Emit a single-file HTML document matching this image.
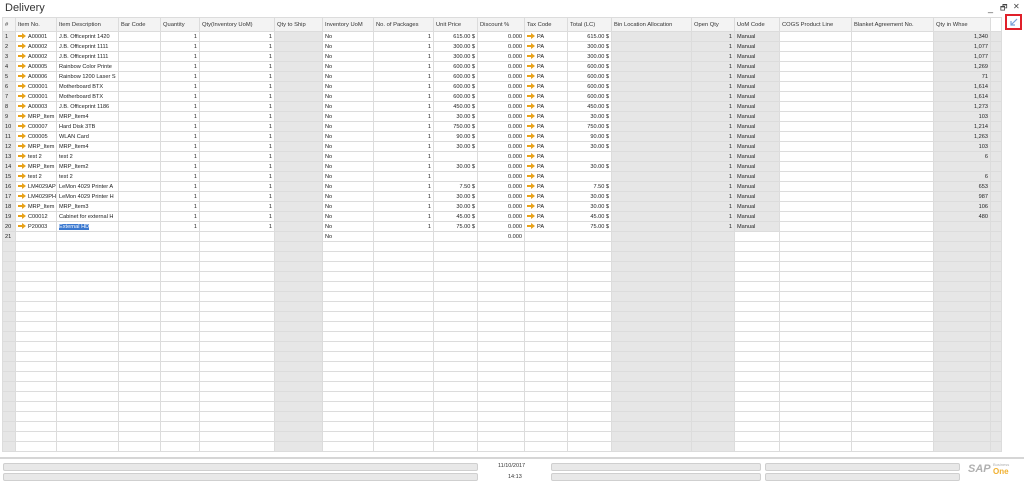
<!DOCTYPE html>
<html><head><meta charset="utf-8"><style>
*{margin:0;padding:0;box-sizing:border-box}
body{width:1024px;height:483px;background:#fff;font-family:"Liberation Sans",sans-serif;position:relative;overflow:hidden;color:#222}
.title{position:absolute;left:5px;top:2px;font-size:11px;color:#333}
.wc{position:absolute;top:2px;font-size:9px;color:#444}
#g{position:absolute;left:2px;top:17px;width:999px;border-collapse:collapse;table-layout:fixed;font-size:5.6px;background:#fff}
#g td{height:10px;border:1px solid #dcdcdc;padding:0 2px;white-space:nowrap;overflow:hidden;line-height:8px}
#g tr.h td{height:14px;background:#f3f3f3;font-size:5.8px;color:#333}
.r{text-align:right}
.gr{background:#e6e6e6}
td.n{background:#e6e6e6}
.ar{display:inline-block;position:relative;width:8px;height:5px;margin-right:2px;vertical-align:-1px}
.ar:before{content:"";position:absolute;left:0;top:1.5px;width:4px;height:2px;background:#e8a21a}
.ar:after{content:"";position:absolute;left:4px;top:-0.5px;border-left:4px solid #e8a21a;border-top:3px solid transparent;border-bottom:3px solid transparent}
.sel{background:#3a78d0;color:#fff}
.sep{position:absolute;left:0;top:457px;width:1024px;height:2px;background:#d6d6d6}
.bx{position:absolute;height:8px;background:#e8e8e8;border:1px solid #cfcfcf;border-radius:2px}
.ft{position:absolute;font-size:5.5px;color:#333}
</style></head><body>
<div class="title">Delivery</div>
<div class="wc" style="left:988px;top:3px">_</div>
<div class="wc" style="left:1000px;font-size:8px">&#x1F5D7;</div>
<div class="wc" style="left:1013px;font-size:8px">&#x2715;</div>
<table id="g">
<colgroup><col style="width:13px"><col style="width:41px"><col style="width:62px"><col style="width:42px"><col style="width:39px"><col style="width:75px"><col style="width:48px"><col style="width:51px"><col style="width:60px"><col style="width:44px"><col style="width:47px"><col style="width:43px"><col style="width:44px"><col style="width:80px"><col style="width:43px"><col style="width:45px"><col style="width:72px"><col style="width:82px"><col style="width:57px"><col style="width:11px"></colgroup>
<tr class="h"><td>#</td><td>Item No.</td><td>Item Description</td><td>Bar Code</td><td>Quantity</td><td>Qty(Inventory UoM)</td><td>Qty to Ship</td><td>Inventory UoM</td><td>No. of Packages</td><td>Unit Price</td><td>Discount %</td><td>Tax Code</td><td>Total (LC)</td><td>Bin Location Allocation</td><td>Open Qty</td><td>UoM Code</td><td>COGS Product Line</td><td>Blanket Agreement No.</td><td>Qty in Whse</td><td style="background:#fff"></td></tr>
<tr><td class="n">1</td><td><i class="ar"></i>A00001</td><td>J.B. Officeprint 1420</td><td></td><td class="r">1</td><td class="r">1</td><td class="gr"></td><td>No</td><td class="r">1</td><td class="r">615.00 $</td><td class="r">0.000</td><td><i class="ar"></i>PA</td><td class="r">615.00 $</td><td class="gr"></td><td class="gr r">1</td><td class="gr">Manual</td><td></td><td></td><td class="gr r">1,340</td><td class="gr"></td></tr>
<tr><td class="n">2</td><td><i class="ar"></i>A00002</td><td>J.B. Officeprint 1111</td><td></td><td class="r">1</td><td class="r">1</td><td class="gr"></td><td>No</td><td class="r">1</td><td class="r">300.00 $</td><td class="r">0.000</td><td><i class="ar"></i>PA</td><td class="r">300.00 $</td><td class="gr"></td><td class="gr r">1</td><td class="gr">Manual</td><td></td><td></td><td class="gr r">1,077</td><td class="gr"></td></tr>
<tr><td class="n">3</td><td><i class="ar"></i>A00002</td><td>J.B. Officeprint 1111</td><td></td><td class="r">1</td><td class="r">1</td><td class="gr"></td><td>No</td><td class="r">1</td><td class="r">300.00 $</td><td class="r">0.000</td><td><i class="ar"></i>PA</td><td class="r">300.00 $</td><td class="gr"></td><td class="gr r">1</td><td class="gr">Manual</td><td></td><td></td><td class="gr r">1,077</td><td class="gr"></td></tr>
<tr><td class="n">4</td><td><i class="ar"></i>A00005</td><td>Rainbow Color Printe</td><td></td><td class="r">1</td><td class="r">1</td><td class="gr"></td><td>No</td><td class="r">1</td><td class="r">600.00 $</td><td class="r">0.000</td><td><i class="ar"></i>PA</td><td class="r">600.00 $</td><td class="gr"></td><td class="gr r">1</td><td class="gr">Manual</td><td></td><td></td><td class="gr r">1,269</td><td class="gr"></td></tr>
<tr><td class="n">5</td><td><i class="ar"></i>A00006</td><td>Rainbow 1200 Laser S</td><td></td><td class="r">1</td><td class="r">1</td><td class="gr"></td><td>No</td><td class="r">1</td><td class="r">600.00 $</td><td class="r">0.000</td><td><i class="ar"></i>PA</td><td class="r">600.00 $</td><td class="gr"></td><td class="gr r">1</td><td class="gr">Manual</td><td></td><td></td><td class="gr r">71</td><td class="gr"></td></tr>
<tr><td class="n">6</td><td><i class="ar"></i>C00001</td><td>Motherboard BTX</td><td></td><td class="r">1</td><td class="r">1</td><td class="gr"></td><td>No</td><td class="r">1</td><td class="r">600.00 $</td><td class="r">0.000</td><td><i class="ar"></i>PA</td><td class="r">600.00 $</td><td class="gr"></td><td class="gr r">1</td><td class="gr">Manual</td><td></td><td></td><td class="gr r">1,614</td><td class="gr"></td></tr>
<tr><td class="n">7</td><td><i class="ar"></i>C00001</td><td>Motherboard BTX</td><td></td><td class="r">1</td><td class="r">1</td><td class="gr"></td><td>No</td><td class="r">1</td><td class="r">600.00 $</td><td class="r">0.000</td><td><i class="ar"></i>PA</td><td class="r">600.00 $</td><td class="gr"></td><td class="gr r">1</td><td class="gr">Manual</td><td></td><td></td><td class="gr r">1,614</td><td class="gr"></td></tr>
<tr><td class="n">8</td><td><i class="ar"></i>A00003</td><td>J.B. Officeprint 1186</td><td></td><td class="r">1</td><td class="r">1</td><td class="gr"></td><td>No</td><td class="r">1</td><td class="r">450.00 $</td><td class="r">0.000</td><td><i class="ar"></i>PA</td><td class="r">450.00 $</td><td class="gr"></td><td class="gr r">1</td><td class="gr">Manual</td><td></td><td></td><td class="gr r">1,273</td><td class="gr"></td></tr>
<tr><td class="n">9</td><td><i class="ar"></i>MRP_Item</td><td>MRP_Item4</td><td></td><td class="r">1</td><td class="r">1</td><td class="gr"></td><td>No</td><td class="r">1</td><td class="r">30.00 $</td><td class="r">0.000</td><td><i class="ar"></i>PA</td><td class="r">30.00 $</td><td class="gr"></td><td class="gr r">1</td><td class="gr">Manual</td><td></td><td></td><td class="gr r">103</td><td class="gr"></td></tr>
<tr><td class="n">10</td><td><i class="ar"></i>C00007</td><td>Hard Disk 3TB</td><td></td><td class="r">1</td><td class="r">1</td><td class="gr"></td><td>No</td><td class="r">1</td><td class="r">750.00 $</td><td class="r">0.000</td><td><i class="ar"></i>PA</td><td class="r">750.00 $</td><td class="gr"></td><td class="gr r">1</td><td class="gr">Manual</td><td></td><td></td><td class="gr r">1,214</td><td class="gr"></td></tr>
<tr><td class="n">11</td><td><i class="ar"></i>C00005</td><td>WLAN Card</td><td></td><td class="r">1</td><td class="r">1</td><td class="gr"></td><td>No</td><td class="r">1</td><td class="r">90.00 $</td><td class="r">0.000</td><td><i class="ar"></i>PA</td><td class="r">90.00 $</td><td class="gr"></td><td class="gr r">1</td><td class="gr">Manual</td><td></td><td></td><td class="gr r">1,263</td><td class="gr"></td></tr>
<tr><td class="n">12</td><td><i class="ar"></i>MRP_Item</td><td>MRP_Item4</td><td></td><td class="r">1</td><td class="r">1</td><td class="gr"></td><td>No</td><td class="r">1</td><td class="r">30.00 $</td><td class="r">0.000</td><td><i class="ar"></i>PA</td><td class="r">30.00 $</td><td class="gr"></td><td class="gr r">1</td><td class="gr">Manual</td><td></td><td></td><td class="gr r">103</td><td class="gr"></td></tr>
<tr><td class="n">13</td><td><i class="ar"></i>test 2</td><td>test 2</td><td></td><td class="r">1</td><td class="r">1</td><td class="gr"></td><td>No</td><td class="r">1</td><td class="r"></td><td class="r">0.000</td><td><i class="ar"></i>PA</td><td class="r"></td><td class="gr"></td><td class="gr r">1</td><td class="gr">Manual</td><td></td><td></td><td class="gr r">6</td><td class="gr"></td></tr>
<tr><td class="n">14</td><td><i class="ar"></i>MRP_Item</td><td>MRP_Item2</td><td></td><td class="r">1</td><td class="r">1</td><td class="gr"></td><td>No</td><td class="r">1</td><td class="r">30.00 $</td><td class="r">0.000</td><td><i class="ar"></i>PA</td><td class="r">30.00 $</td><td class="gr"></td><td class="gr r">1</td><td class="gr">Manual</td><td></td><td></td><td class="gr r"></td><td class="gr"></td></tr>
<tr><td class="n">15</td><td><i class="ar"></i>test 2</td><td>test 2</td><td></td><td class="r">1</td><td class="r">1</td><td class="gr"></td><td>No</td><td class="r">1</td><td class="r"></td><td class="r">0.000</td><td><i class="ar"></i>PA</td><td class="r"></td><td class="gr"></td><td class="gr r">1</td><td class="gr">Manual</td><td></td><td></td><td class="gr r">6</td><td class="gr"></td></tr>
<tr><td class="n">16</td><td><i class="ar"></i>LM4029AP</td><td>LeMon 4029 Printer A</td><td></td><td class="r">1</td><td class="r">1</td><td class="gr"></td><td>No</td><td class="r">1</td><td class="r">7.50 $</td><td class="r">0.000</td><td><i class="ar"></i>PA</td><td class="r">7.50 $</td><td class="gr"></td><td class="gr r">1</td><td class="gr">Manual</td><td></td><td></td><td class="gr r">653</td><td class="gr"></td></tr>
<tr><td class="n">17</td><td><i class="ar"></i>LM4029PH</td><td>LeMon 4029 Printer H</td><td></td><td class="r">1</td><td class="r">1</td><td class="gr"></td><td>No</td><td class="r">1</td><td class="r">30.00 $</td><td class="r">0.000</td><td><i class="ar"></i>PA</td><td class="r">30.00 $</td><td class="gr"></td><td class="gr r">1</td><td class="gr">Manual</td><td></td><td></td><td class="gr r">987</td><td class="gr"></td></tr>
<tr><td class="n">18</td><td><i class="ar"></i>MRP_Item</td><td>MRP_Item3</td><td></td><td class="r">1</td><td class="r">1</td><td class="gr"></td><td>No</td><td class="r">1</td><td class="r">30.00 $</td><td class="r">0.000</td><td><i class="ar"></i>PA</td><td class="r">30.00 $</td><td class="gr"></td><td class="gr r">1</td><td class="gr">Manual</td><td></td><td></td><td class="gr r">106</td><td class="gr"></td></tr>
<tr><td class="n">19</td><td><i class="ar"></i>C00012</td><td>Cabinet for external H</td><td></td><td class="r">1</td><td class="r">1</td><td class="gr"></td><td>No</td><td class="r">1</td><td class="r">45.00 $</td><td class="r">0.000</td><td><i class="ar"></i>PA</td><td class="r">45.00 $</td><td class="gr"></td><td class="gr r">1</td><td class="gr">Manual</td><td></td><td></td><td class="gr r">480</td><td class="gr"></td></tr>
<tr><td class="n">20</td><td><i class="ar"></i>P20003</td><td><span class="sel">External HD</span></td><td></td><td class="r">1</td><td class="r">1</td><td class="gr"></td><td>No</td><td class="r">1</td><td class="r">75.00 $</td><td class="r">0.000</td><td><i class="ar"></i>PA</td><td class="r">75.00 $</td><td class="gr"></td><td class="gr r">1</td><td class="gr">Manual</td><td></td><td></td><td class="gr r"></td><td class="gr"></td></tr>
<tr><td class="n">21</td><td></td><td></td><td></td><td></td><td></td><td class="gr"></td><td>No</td><td></td><td></td><td class="r">0.000</td><td></td><td></td><td class="gr"></td><td class="gr"></td><td></td><td></td><td></td><td class="gr"></td><td class="gr"></td></tr>
<tr><td class="n"></td><td></td><td></td><td></td><td></td><td></td><td class="gr"></td><td></td><td></td><td></td><td></td><td></td><td></td><td class="gr"></td><td class="gr"></td><td></td><td></td><td></td><td class="gr"></td><td class="gr"></td></tr>
<tr><td class="n"></td><td></td><td></td><td></td><td></td><td></td><td class="gr"></td><td></td><td></td><td></td><td></td><td></td><td></td><td class="gr"></td><td class="gr"></td><td></td><td></td><td></td><td class="gr"></td><td class="gr"></td></tr>
<tr><td class="n"></td><td></td><td></td><td></td><td></td><td></td><td class="gr"></td><td></td><td></td><td></td><td></td><td></td><td></td><td class="gr"></td><td class="gr"></td><td></td><td></td><td></td><td class="gr"></td><td class="gr"></td></tr>
<tr><td class="n"></td><td></td><td></td><td></td><td></td><td></td><td class="gr"></td><td></td><td></td><td></td><td></td><td></td><td></td><td class="gr"></td><td class="gr"></td><td></td><td></td><td></td><td class="gr"></td><td class="gr"></td></tr>
<tr><td class="n"></td><td></td><td></td><td></td><td></td><td></td><td class="gr"></td><td></td><td></td><td></td><td></td><td></td><td></td><td class="gr"></td><td class="gr"></td><td></td><td></td><td></td><td class="gr"></td><td class="gr"></td></tr>
<tr><td class="n"></td><td></td><td></td><td></td><td></td><td></td><td class="gr"></td><td></td><td></td><td></td><td></td><td></td><td></td><td class="gr"></td><td class="gr"></td><td></td><td></td><td></td><td class="gr"></td><td class="gr"></td></tr>
<tr><td class="n"></td><td></td><td></td><td></td><td></td><td></td><td class="gr"></td><td></td><td></td><td></td><td></td><td></td><td></td><td class="gr"></td><td class="gr"></td><td></td><td></td><td></td><td class="gr"></td><td class="gr"></td></tr>
<tr><td class="n"></td><td></td><td></td><td></td><td></td><td></td><td class="gr"></td><td></td><td></td><td></td><td></td><td></td><td></td><td class="gr"></td><td class="gr"></td><td></td><td></td><td></td><td class="gr"></td><td class="gr"></td></tr>
<tr><td class="n"></td><td></td><td></td><td></td><td></td><td></td><td class="gr"></td><td></td><td></td><td></td><td></td><td></td><td></td><td class="gr"></td><td class="gr"></td><td></td><td></td><td></td><td class="gr"></td><td class="gr"></td></tr>
<tr><td class="n"></td><td></td><td></td><td></td><td></td><td></td><td class="gr"></td><td></td><td></td><td></td><td></td><td></td><td></td><td class="gr"></td><td class="gr"></td><td></td><td></td><td></td><td class="gr"></td><td class="gr"></td></tr>
<tr><td class="n"></td><td></td><td></td><td></td><td></td><td></td><td class="gr"></td><td></td><td></td><td></td><td></td><td></td><td></td><td class="gr"></td><td class="gr"></td><td></td><td></td><td></td><td class="gr"></td><td class="gr"></td></tr>
<tr><td class="n"></td><td></td><td></td><td></td><td></td><td></td><td class="gr"></td><td></td><td></td><td></td><td></td><td></td><td></td><td class="gr"></td><td class="gr"></td><td></td><td></td><td></td><td class="gr"></td><td class="gr"></td></tr>
<tr><td class="n"></td><td></td><td></td><td></td><td></td><td></td><td class="gr"></td><td></td><td></td><td></td><td></td><td></td><td></td><td class="gr"></td><td class="gr"></td><td></td><td></td><td></td><td class="gr"></td><td class="gr"></td></tr>
<tr><td class="n"></td><td></td><td></td><td></td><td></td><td></td><td class="gr"></td><td></td><td></td><td></td><td></td><td></td><td></td><td class="gr"></td><td class="gr"></td><td></td><td></td><td></td><td class="gr"></td><td class="gr"></td></tr>
<tr><td class="n"></td><td></td><td></td><td></td><td></td><td></td><td class="gr"></td><td></td><td></td><td></td><td></td><td></td><td></td><td class="gr"></td><td class="gr"></td><td></td><td></td><td></td><td class="gr"></td><td class="gr"></td></tr>
<tr><td class="n"></td><td></td><td></td><td></td><td></td><td></td><td class="gr"></td><td></td><td></td><td></td><td></td><td></td><td></td><td class="gr"></td><td class="gr"></td><td></td><td></td><td></td><td class="gr"></td><td class="gr"></td></tr>
<tr><td class="n"></td><td></td><td></td><td></td><td></td><td></td><td class="gr"></td><td></td><td></td><td></td><td></td><td></td><td></td><td class="gr"></td><td class="gr"></td><td></td><td></td><td></td><td class="gr"></td><td class="gr"></td></tr>
<tr><td class="n"></td><td></td><td></td><td></td><td></td><td></td><td class="gr"></td><td></td><td></td><td></td><td></td><td></td><td></td><td class="gr"></td><td class="gr"></td><td></td><td></td><td></td><td class="gr"></td><td class="gr"></td></tr>
<tr><td class="n"></td><td></td><td></td><td></td><td></td><td></td><td class="gr"></td><td></td><td></td><td></td><td></td><td></td><td></td><td class="gr"></td><td class="gr"></td><td></td><td></td><td></td><td class="gr"></td><td class="gr"></td></tr>
<tr><td class="n"></td><td></td><td></td><td></td><td></td><td></td><td class="gr"></td><td></td><td></td><td></td><td></td><td></td><td></td><td class="gr"></td><td class="gr"></td><td></td><td></td><td></td><td class="gr"></td><td class="gr"></td></tr>
<tr><td class="n"></td><td></td><td></td><td></td><td></td><td></td><td class="gr"></td><td></td><td></td><td></td><td></td><td></td><td></td><td class="gr"></td><td class="gr"></td><td></td><td></td><td></td><td class="gr"></td><td class="gr"></td></tr>
</table>
<div style="position:absolute;left:1005px;top:14px;width:17px;height:16px;border:2px solid #e0202a;background:#fff;z-index:2"></div>
<svg style="position:absolute;left:1009px;top:18px;z-index:3" width="9" height="9"><path d="M8 1L2 7M2 3V7H6" stroke="#7aa2d8" stroke-width="1.2" fill="none"/></svg>
<div class="sep"></div>
<div class="bx" style="left:3px;top:463px;width:475px"></div>
<div class="bx" style="left:3px;top:473px;width:475px"></div>
<div class="ft" style="left:498px;top:463px">11/10/2017</div>
<div class="ft" style="left:508px;top:474px">14:13</div>
<div class="bx" style="left:551px;top:463px;width:210px"></div>
<div class="bx" style="left:551px;top:473px;width:210px"></div>
<div class="bx" style="left:765px;top:463px;width:195px"></div>
<div class="bx" style="left:765px;top:473px;width:195px"></div>
<div style="position:absolute;left:968px;top:463px;font-size:11px;font-weight:bold;color:#b0b0b0;font-style:italic">SAP</div>
<div style="position:absolute;left:993px;top:462px;font-size:4px;color:#b0b0b0">Business</div>
<div style="position:absolute;left:993px;top:467px;font-size:8px;color:#f0b030;font-weight:bold">One</div>
</body></html>
